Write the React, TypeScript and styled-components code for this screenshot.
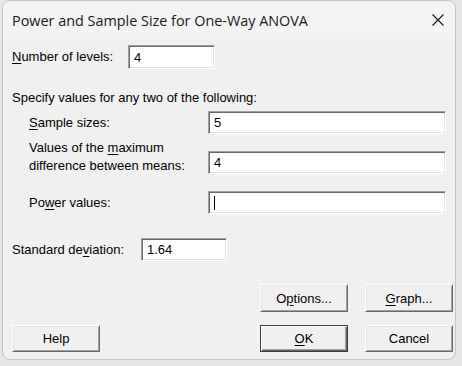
import styled, { createGlobalStyle } from "styled-components";

const Global = createGlobalStyle`
  html, body {
    margin: 0;
    padding: 0;
    background: #e6e6e6;
  }
  body {
    font-family: "Liberation Sans", Arial, sans-serif;
  }
`;

// 窓
const Window = styled.div`
  box-sizing: border-box;
  margin: 0 0 0 2px;
  width: 454px;
  height: 360px;
  border: 1px solid #c4c4c4;
  border-radius: 8px;
  background: #f0f0f0;
  display: flex;
  flex-direction: column;
  overflow: hidden;
`;

const TitleBar = styled.div`
  height: 38px;
  display: flex;
  align-items: center;
  padding: 0 10px 0 9px;
  background: #f3f3f3;
`;

const Title = styled.div`
  flex: 1;
  font-family: "Open Sans", "Noto Sans", sans-serif;
  font-size: 14.4px;
  color: #1a1a1a;
`;

const CloseIcon = styled.svg`
  width: 12px;
  height: 12px;
  margin-right: 1px;
`;

const Body = styled.div`
  display: flex;
  flex-direction: column;
  padding: 0 2px 0 9px;
  font-size: 13px;
  color: #000;
`;

const Row = styled.div<{ $top: number; $h?: number }>`
  display: flex;
  align-items: center;
  margin-top: ${(p) => p.$top}px;
  height: ${(p) => (p.$h ? `${p.$h}px` : "auto")};
`;

const Label = styled.div<{ $w: number; $indent?: number }>`
  box-sizing: border-box;
  width: ${(p) => p.$w}px;
  padding-left: ${(p) => p.$indent ?? 0}px;
  flex-shrink: 0;
  line-height: 18px;
`;

const Heading = styled.div<{ $top: number }>`
  margin-top: ${(p) => p.$top}px;
  height: 14px;
  line-height: 14px;
`;

const Field = styled.div<{ $w: number; $h?: number; $alignTop?: number }>`
  box-sizing: border-box;
  width: ${(p) => p.$w}px;
  height: ${(p) => p.$h ?? 23}px;
  margin-top: ${(p) => p.$alignTop ?? 0}px;
  align-self: ${(p) => (p.$alignTop ? "flex-start" : "center")};
  background: #fff;
  border-style: solid;
  border-width: 1px;
  border-color: #a0a0a0 #ffffff #ffffff #a0a0a0;
  box-shadow: inset 1px 1px 0 #696969, inset -1px -1px 0 #e3e3e3;
  display: flex;
  align-items: center;
  padding-left: 5px;
  font-size: 13px;
`;

const Caret = styled.span`
  display: inline-block;
  width: 1px;
  height: 14px;
  background: #000;
`;

const U = styled.span`
  text-decoration: underline;
  text-underline-offset: 2px;
`;

const ButtonRow = styled.div<{ $top: number }>`
  display: flex;
  margin-top: ${(p) => p.$top}px;
`;

const Spacer = styled.div`
  flex: 1;
`;

const Button = styled.button<{ $default?: boolean; $h?: number }>`
  box-sizing: border-box;
  width: 88px;
  height: ${(p) => p.$h ?? 28}px;
  background: #f0f0f0;
  font-family: "Liberation Sans", Arial, sans-serif;
  font-size: 13px;
  color: #000;
  padding: 0;
  margin: 0;
  border-style: solid;
  border-width: 1px;
  border-color: ${(p) =>
    p.$default ? "#3c3c3c" : "#ffffff #696969 #696969 #ffffff"};
  box-shadow: ${(p) =>
    p.$default
      ? "inset 1px 1px 0 #ffffff, inset -1px -1px 0 #696969, inset -2px -2px 0 #a0a0a0"
      : "inset 1px 1px 0 #e3e3e3, inset -1px -1px 0 #a0a0a0"};
`;

const Gap = styled.div`
  width: 17px;
  flex-shrink: 0;
`;

export default function App() {
  return (
    <>
      <Global />
      <Window>
        <TitleBar>
          <Title>Power and Sample Size for One-Way ANOVA</Title>
          <CloseIcon viewBox="0 0 12 12">
            <path d="M0.5 0.5 L11.5 11.5 M11.5 0.5 L0.5 11.5" stroke="#1a1a1a" strokeWidth="1.1" fill="none" />
          </CloseIcon>
        </TitleBar>

        <Body>
          <Row $top={6} $h={24}>
            <Label $w={116}>
              <U>N</U>umber of levels:
            </Label>
            <Field $w={87} $h={24}>4</Field>
          </Row>

          <Heading $top={22}>Specify values for any two of the following:</Heading>

          <Row $top={6} $h={23}>
            <Label $w={196} $indent={17}>
              <U>S</U>ample sizes:
            </Label>
            <Field $w={238}>5</Field>
          </Row>

          <Row $top={5}>
            <Label $w={196} $indent={17}>
              Values of the <U>m</U>aximum
              <br />
              difference between means:
            </Label>
            <Field $w={238} $alignTop={12}>4</Field>
          </Row>

          <Row $top={16} $h={23}>
            <Label $w={196} $indent={17}>
              Po<U>w</U>er values:
            </Label>
            <Field $w={238}>
              <Caret />
            </Field>
          </Row>

          <Row $top={24} $h={23}>
            <Label $w={129}>
              Standard de<U>v</U>iation:
            </Label>
            <Field $w={86}>1.64</Field>
          </Row>

          <ButtonRow $top={23}>
            <Spacer />
            <Button>
              O<U>p</U>tions...
            </Button>
            <Gap />
            <Button>
              <U>G</U>raph...
            </Button>
          </ButtonRow>

          <ButtonRow $top={13}>
            <Button $h={27}>Help</Button>
            <Spacer />
            <Button $default $h={27}>
              <U>O</U>K
            </Button>
            <Gap />
            <Button $h={27}>Cancel</Button>
          </ButtonRow>
        </Body>
      </Window>
    </>
  );
}
